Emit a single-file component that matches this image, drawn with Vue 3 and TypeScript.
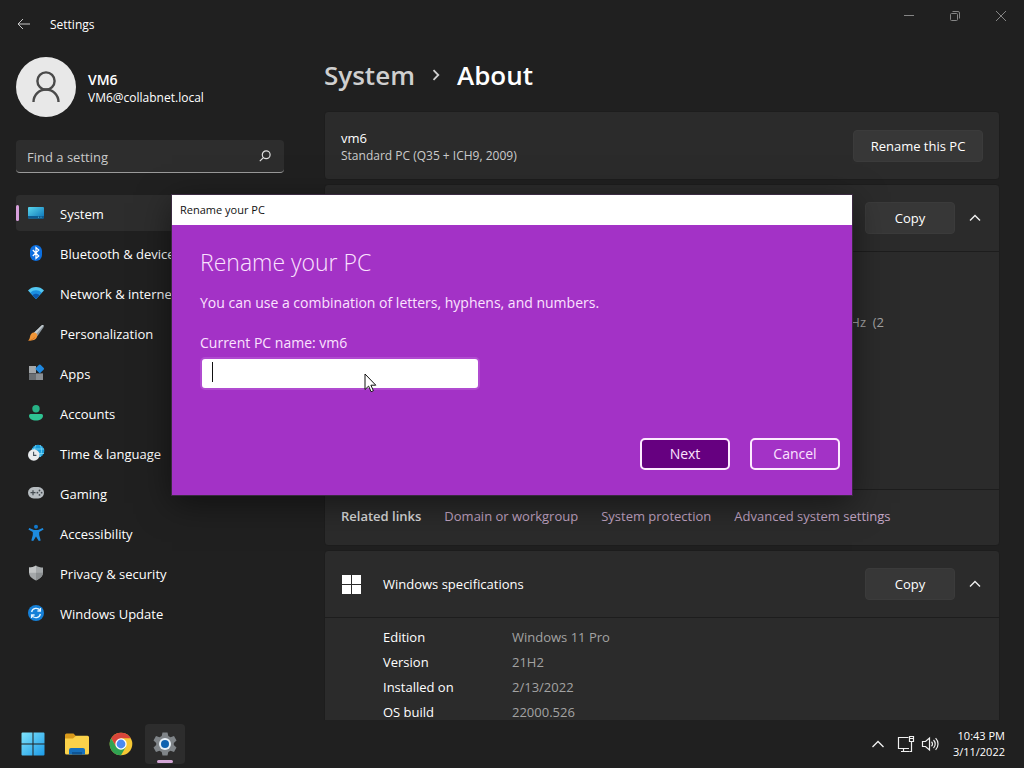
<script setup lang="ts">
import { ref } from 'vue'

interface NavItem {
  id: string
  label: string
}

interface SpecRow {
  name: string
  value: string
}

const navItems: NavItem[] = [
  { id: 'system', label: 'System' },
  { id: 'bluetooth', label: 'Bluetooth & devices' },
  { id: 'network', label: 'Network & internet' },
  { id: 'personalization', label: 'Personalization' },
  { id: 'apps', label: 'Apps' },
  { id: 'accounts', label: 'Accounts' },
  { id: 'time', label: 'Time & language' },
  { id: 'gaming', label: 'Gaming' },
  { id: 'accessibility', label: 'Accessibility' },
  { id: 'privacy', label: 'Privacy & security' },
  { id: 'update', label: 'Windows Update' },
]

const relatedLinks: string[] = ['Domain or workgroup', 'System protection', 'Advanced system settings']

const windowsSpecs: SpecRow[] = [
  { name: 'Edition', value: 'Windows 11 Pro' },
  { name: 'Version', value: '21H2' },
  { name: 'Installed on', value: '2/13/2022' },
  { name: 'OS build', value: '22000.526' },
]

const selected = ref('system')
const search = ref('')
const pcName = ref('')
</script>

<template>
  <div class="desktop">
    <div class="window">
      <header class="titlebar">
        <button class="back" type="button" aria-label="Back">
          <svg width="14" height="12" viewBox="0 0 14 12" fill="none" stroke="#c8c8c8">
            <path d="M13 6H1M6 1L1 6l5 5" />
          </svg>
        </button>
        <span class="app-title">Settings</span>
        <div class="window-controls">
          <button type="button" aria-label="Minimize">
            <svg width="12" height="12" viewBox="0 0 12 12" fill="none" stroke="#858585"><path d="M1 5.500h10" /></svg>
          </button>
          <button type="button" aria-label="Restore">
            <svg width="12" height="12" viewBox="0 0 12 12" fill="none" stroke="#858585">
              <rect x="1.500" y="3.500" width="7" height="7" rx="1" />
              <path d="M3.500 1.500H9a1.500 1.500 0 0 1 1.500 1.500v5.500" />
            </svg>
          </button>
          <button type="button" aria-label="Close">
            <svg width="12" height="12" viewBox="0 0 12 12" fill="none" stroke="#858585"><path d="M1 1l10 10M11 1L1 11" /></svg>
          </button>
        </div>
      </header>

      <div class="body">
        <aside class="sidebar">
          <div class="profile">
            <svg class="avatar" width="60" height="60" viewBox="0 0 60 60">
              <circle cx="30" cy="30" r="30" fill="#e8e8e8" />
              <g fill="none" stroke="#4a4a4a" stroke-width="2.400">
                <circle cx="30" cy="24" r="8.600" />
                <path d="M17.500 45a12.500 12.500 0 0 1 25 0" />
              </g>
            </svg>
            <div class="user">
              <div class="user-name">VM6</div>
              <div class="user-mail">VM6@collabnet.local</div>
            </div>
          </div>

          <div class="search">
            <input v-model="search" type="text" placeholder="Find a setting" aria-label="Find a setting" />
            <svg width="12" height="12" viewBox="0 0 12 12" fill="none" stroke="#e0e0e0" stroke-width="1.200">
              <circle cx="7.200" cy="4.800" r="3.900" />
              <path d="M4.400 7.600L.8 11.200" />
            </svg>
          </div>

          <nav class="nav">
            <button
              v-for="item in navItems"
              :key="item.id"
              type="button"
              :class="{ active: item.id === selected }"
              @click="selected = item.id"
            >
              <svg class="nav-icon" width="18" height="18" viewBox="0 0 18 18">
                <template v-if="item.id === 'system'">
                  <defs>
                    <linearGradient id="screen" x1="0" y1="0" x2="1" y2="1">
                      <stop offset="0" stop-color="#5ad6ec" />
                      <stop offset="1" stop-color="#0a72b8" />
                    </linearGradient>
                  </defs>
                  <rect x="1" y="3" width="16" height="11.500" rx="1" fill="url(#screen)" />
                  <path d="M1 12h16v1.500a1 1 0 0 1-1 1H2a1 1 0 0 1-1-1z" fill="#0e5c93" />
                  <path d="M11 13.200h1M13.500 13.200h1" stroke="#5ad6ec" stroke-width=".8" />
                </template>
                <template v-else-if="item.id === 'bluetooth'">
                  <rect x="3" y="1" width="12" height="16" rx="6" fill="#0c6fe0" />
                  <path d="M5.800 6l6 6L9 14.500v-11L11.800 6l-6 6" fill="none" stroke="#fff" stroke-width="1.200" />
                </template>
                <template v-else-if="item.id === 'network'">
                  <path d="M1 6.500c4.300-4.600 11.700-4.600 16 0L9 15z" fill="#53c7f2" />
                  <path d="M3.300 8.800c3-3.300 8.400-3.300 11.400 0L9 15z" fill="#1b8fe0" />
                  <path d="M5.500 11.200c1.900-2 5.100-2 7 0L9 15z" fill="#0b58ae" />
                </template>
                <template v-else-if="item.id === 'personalization'">
                  <path d="M14.800 1.300c1.400-.8 2.500.1 1.900 1.600l-6.200 9.200-3.800-3.200z" fill="#8d989f" />
                  <path d="M14.800 1.300c.8-.4 1.400-.4 1.700.1L8.700 10.400l-2-1.500z" fill="#c4ccd0" />
                  <path d="M6.900 8.500c2.200.2 3.400 1.500 3.500 3.300-.6 3.700-4.400 5.500-9.700 4.800 1.700-.8 1.900-2 2.300-3.900.4-2.400 1.900-4.200 3.900-4.200z" fill="#ef9537" />
                  <path d="M8.300 12.500c-.9 2.600-3.400 4-7.600 4.100 3.600-.5 5.800-1.900 7.600-4.100z" fill="#c4641c" />
                </template>
                <template v-else-if="item.id === 'apps'">
                  <rect x="2" y="2" width="7" height="7" fill="#a3a7aa" />
                  <rect x="2" y="9" width="7" height="7" fill="#6b6f73" />
                  <rect x="9" y="9" width="7" height="7" fill="#8a8e92" />
                  <rect x="2" y="9" width="14" height=".6" fill="#46494c" />
                  <rect x="9.500" y="1.500" width="6.600" height="6.600" rx="1" transform="rotate(45 12.800 4.800)" fill="#1e88e0" />
                </template>
                <template v-else-if="item.id === 'accounts'">
                  <circle cx="9" cy="4.700" r="3.700" fill="#27b286" />
                  <path d="M3.500 10h11A1.500 1.500 0 0 1 16 11.500c0 3.200-3 5-7 5s-7-1.800-7-5A1.500 1.500 0 0 1 3.500 10z" fill="#2fc393" />
                </template>
                <template v-else-if="item.id === 'time'">
                  <circle cx="11" cy="7" r="6.300" fill="#1b9ddb" />
                  <path d="M9 1c-2 3-2 8 0 12M13 1c2 3 2 8 0 12M5 5h12M5 9.500h12" fill="none" stroke="#7fdcf7" stroke-width=".8" />
                  <circle cx="6.800" cy="11" r="5.800" fill="#e8ebee" />
                  <path d="M6.600 7.800v3.600h2.800" fill="none" stroke="#45515c" stroke-width="1.100" />
                </template>
                <template v-else-if="item.id === 'gaming'">
                  <rect x="1" y="3" width="16" height="11.500" rx="5.700" fill="#b6bcc0" />
                  <path d="M6 6.200v5M3.500 8.700h5" stroke="#444b50" stroke-width="1.200" />
                  <g fill="#444b50">
                    <circle cx="12.500" cy="6.500" r=".9" /><circle cx="12.500" cy="10.900" r=".9" />
                    <circle cx="10.400" cy="8.700" r=".9" /><circle cx="14.600" cy="8.700" r=".9" />
                  </g>
                </template>
                <template v-else-if="item.id === 'accessibility'">
                  <circle cx="9" cy="2.800" r="2" fill="#1179cd" />
                  <path d="M2.300 3.900L7 6h4l4.700-2.100.9 1.700-4.400 2.300v3l1.500 5.600-1.900.6L9 12.400l-2.800 4.700-1.900-.6 1.500-5.600v-3L1.400 5.600z" fill="#1d8be0" />
                </template>
                <template v-else-if="item.id === 'privacy'">
                  <path d="M9 1.500c2 1.500 4.500 2 7 2v4.800c0 4-3 6.400-7 8.200-4-1.800-7-4.200-7-8.200V3.500c2.500 0 5-.5 7-2z" fill="#a4a8aa" />
                  <path d="M9 1.500v7.300H2V3.500c2.500 0 5-.5 7-2z" fill="#c2c5c6" />
                  <path d="M9 8.800h7c-.2 3.700-3.200 6-7 7.700z" fill="#8c9092" />
                </template>
                <template v-else>
                  <circle cx="9" cy="9" r="8" fill="#1580d8" />
                  <g fill="none" stroke="#e4f4ff" stroke-width="1.300">
                    <path d="M4.600 8A4.600 4.600 0 0 1 13 6.500M13.400 4v3h-3" />
                    <path d="M13.400 10A4.600 4.600 0 0 1 5 11.500M4.600 14v-3h3" />
                  </g>
                </template>
              </svg>
              <span>{{ item.label }}</span>
            </button>
          </nav>
        </aside>

        <main class="content">
          <h1 class="crumbs">
            <a href="#">System</a>
            <svg width="8" height="12" viewBox="0 0 8 12" fill="none" stroke="#d0d0d0" stroke-width="1.800"><path d="M1.500 1.200L6.300 6l-4.800 4.800" /></svg>
            <span>About</span>
          </h1>

          <section class="card pc">
            <div class="pc-text">
              <div class="pc-name">vm6</div>
              <div class="pc-model">Standard PC (Q35 + ICH9, 2009)</div>
            </div>
            <button class="btn rename" type="button">Rename this PC</button>
          </section>

          <section class="card">
            <div class="card-head">
              <button class="btn copy" type="button">Copy</button>
              <button class="expander" type="button" aria-label="Collapse device specifications">
                <svg width="12" height="8" viewBox="0 0 12 8" fill="none" stroke="#f0f0f0" stroke-width="1.400"><path d="M1 6.500l5-5 5 5" /></svg>
              </button>
            </div>
            <div class="device-body">
              <p class="processor">GHz&nbsp; (2</p>
            </div>
            <div class="related">
              <strong>Related links</strong>
              <a v-for="link in relatedLinks" :key="link" href="#">{{ link }}</a>
            </div>
          </section>

          <section class="card">
            <div class="card-head">
              <svg class="logo" width="19" height="19" viewBox="0 0 19 19" fill="#fff">
                <path d="M0 0h9v9H0zM10 0h9v9h-9zM0 10h9v9H0zM10 10h9v9h-9z" />
              </svg>
              <h2>Windows specifications</h2>
              <button class="btn copy" type="button">Copy</button>
              <button class="expander" type="button" aria-label="Collapse Windows specifications">
                <svg width="12" height="8" viewBox="0 0 12 8" fill="none" stroke="#f0f0f0" stroke-width="1.400"><path d="M1 6.500l5-5 5 5" /></svg>
              </button>
            </div>
            <dl class="specs">
              <template v-for="row in windowsSpecs" :key="row.name">
                <dt>{{ row.name }}</dt>
                <dd>{{ row.value }}</dd>
              </template>
            </dl>
          </section>
        </main>
      </div>
    </div>

    <footer class="taskbar">
      <div class="task-icons">
        <button type="button" aria-label="Start">
          <svg width="24" height="24" viewBox="0 0 24 24">
            <defs>
              <linearGradient id="start" x1="0" y1="0" x2="1" y2="1">
                <stop offset="0" stop-color="#7fe3fb" />
                <stop offset="1" stop-color="#1c9be8" />
              </linearGradient>
            </defs>
            <path d="M1.500.5h10v11H.5v-10a1 1 0 0 1 1-1zM12.500.5h10a1 1 0 0 1 1 1v10h-11zM.5 12.500h11v11h-10a1 1 0 0 1-1-1zM12.500 12.500h11v10a1 1 0 0 1-1 1h-10z" fill="url(#start)" />
          </svg>
        </button>
        <button type="button" aria-label="File Explorer">
          <svg width="26" height="24" viewBox="0 0 26 24">
            <path d="M1 3a1.500 1.500 0 0 1 1.500-1.500h7L12 4v6H1z" fill="#d99a1b" />
            <path d="M1 6.500h8L12 3.800h11.500A1.500 1.500 0 0 1 25 5.300V21a1.500 1.500 0 0 1-1.500 1.500h-21A1.500 1.500 0 0 1 1 21z" fill="#fbd24a" />
            <path d="M5 22.500V18a2 2 0 0 1 2-2h12a2 2 0 0 1 2 2v4.500z" fill="#1670be" />
            <path d="M8 22.500V20h10v2.500z" fill="#0f5595" />
          </svg>
        </button>
        <button type="button" aria-label="Google Chrome">
          <svg width="24" height="24" viewBox="0 0 24 24">
            <circle cx="12" cy="12" r="11.300" fill="#f6c834" />
            <path d="M2.200 6.350A11.300 11.300 0 0 1 21.800 6.350H12L7.100 14.800z" fill="#d9453a" />
            <path d="M2.200 6.350A11.300 11.300 0 0 0 12 23.300l4.900-8.500H7.100z" fill="#30a352" />
            <circle cx="12" cy="12" r="5.700" fill="#fff" />
            <circle cx="12" cy="12" r="4.400" fill="#4a8af0" />
          </svg>
        </button>
        <button class="running" type="button" aria-label="Settings">
          <svg width="26" height="26" viewBox="0 0 26 26">
            <path d="M10.500 1.500h5l.8 3.500 2.200 1.200 3.500-1.100 2.500 4.300-2.700 2.500v2.200l2.700 2.500-2.500 4.300-3.500-1.100-2.200 1.200-.8 3.500h-5l-.8-3.500-2.200-1.200L4 20.900l-2.500-4.300 2.700-2.500v-2.200L1.500 9.400 4 5.100l3.500 1.100L9.700 5z" fill="#7f8488" />
            <circle cx="13" cy="13" r="6" fill="#e9f1f8" />
            <circle cx="13" cy="13" r="4" fill="#0f62b0" />
          </svg>
        </button>
      </div>
      <div class="tray">
        <button type="button" aria-label="Show hidden icons">
          <svg width="14" height="8" viewBox="0 0 14 8" fill="none" stroke="#f0f0f0" stroke-width="1.300"><path d="M1.500 7L7 1.500 12.500 7" /></svg>
        </button>
        <button type="button" aria-label="Network">
          <svg width="18" height="18" viewBox="0 0 18 18" fill="none" stroke="#f0f0f0" stroke-width="1.200">
            <path d="M11.500 2.500H1.500v11h10.500M4 16.500h8.500M6.500 13.500v3" />
            <path d="M12.500 1.500h4v5h-4zM12.500 3.500h4M14.500 6.500v10h-2" />
          </svg>
        </button>
        <button type="button" aria-label="Volume">
          <svg width="18" height="16" viewBox="0 0 18 16" fill="none" stroke="#f0f0f0" stroke-width="1.200">
            <path d="M1.500 5.500h3L8.500 2v12l-4-3.500h-3z" />
            <path d="M10.500 5.800a3 3 0 0 1 0 4.400M12.500 4a5.600 5.600 0 0 1 0 8M14.600 2.200a8.200 8.200 0 0 1 0 11.600" />
          </svg>
        </button>
        <time class="clock">10:43 PM<br />3/11/2022</time>
      </div>
    </footer>

    <div class="dialog" role="dialog" aria-labelledby="dialog-title">
      <div class="dialog-bar">Rename your PC</div>
      <form class="dialog-body" @submit.prevent>
        <h2 id="dialog-title">Rename your PC</h2>
        <p>You can use a combination of letters, hyphens, and numbers.</p>
        <label for="pc-name">Current PC name: vm6</label>
        <div class="field">
          <input id="pc-name" v-model="pcName" type="text" autocomplete="off" />
          <span class="caret"></span>
          <svg class="pointer" width="13" height="20" viewBox="0 0 13 20">
            <path d="M1 1v15.500l3.600-3.400 2.500 5.600 2.300-1-2.500-5.500h4.900z" fill="#fff" stroke="#111" />
          </svg>
        </div>
        <div class="actions">
          <button class="next" type="submit">Next</button>
          <button type="button">Cancel</button>
        </div>
      </form>
    </div>
  </div>
</template>

<style>
body {
  margin: 0;
  background: #202020;
}
</style>

<style scoped>
.desktop {
  position: relative;
  display: flex;
  flex-direction: column;
  height: 100vh;
  overflow: hidden;
  background: #202020;
  color: #fff;
  font: 13px/20px "Open Sans", "Noto Sans", sans-serif;
}

.desktop * {
  box-sizing: border-box;
}

button,
input {
  margin: 0;
  padding: 0;
  border: 0;
  background: none;
  color: inherit;
  font: inherit;
}

h1,
h2,
p,
dl,
dd {
  margin: 0;
  font-weight: 400;
}

a {
  color: inherit;
  text-decoration: none;
}

svg {
  display: block;
  flex: none;
}

.window {
  flex: 1;
  min-height: 0;
  display: flex;
  flex-direction: column;
  overflow: hidden;
}

.titlebar {
  flex: none;
  display: flex;
  align-items: center;
  height: 48px;
  padding-left: 17px;
}

.back {
  margin-right: 19px;
}

.app-title {
  padding-top: 2px;
  font-size: 12px;
}

.window-controls {
  display: flex;
  align-self: flex-start;
  margin-left: auto;
}

.window-controls button {
  display: grid;
  place-items: center;
  width: 46px;
  height: 32px;
}

.body {
  flex: 1;
  min-height: 0;
  display: flex;
}

.sidebar {
  flex: none;
  width: 300px;
  padding: 9px 16px 0;
}

.profile {
  display: flex;
  align-items: center;
  gap: 12px;
}

.user {
  padding-top: 4px;
}

.user-name {
  font-size: 14px;
  font-weight: 600;
  line-height: 18px;
}

.user-mail {
  font-size: 12px;
  line-height: 18px;
}

.search {
  display: flex;
  align-items: center;
  height: 33px;
  margin-top: 23px;
  padding: 0 13px 0 11px;
  border-bottom: 1px solid #9a9a9a;
  border-radius: 4px;
  background: #2d2d2d;
}

.search input {
  flex: 1;
  min-width: 0;
  padding-top: 2px;
  outline: none;
}

.search input::placeholder {
  color: #c9c9c9;
  opacity: 1;
}

.nav {
  display: flex;
  flex-direction: column;
  gap: 4px;
  margin-top: 22px;
}

.nav button {
  position: relative;
  display: flex;
  align-items: center;
  gap: 15px;
  height: 36px;
  padding-left: 11px;
  border-radius: 4px;
  text-align: left;
}

.nav span {
  padding-top: 2px;
}

.nav button.active {
  background: #2d2d2d;
}

.nav button.active::before {
  content: "";
  position: absolute;
  left: 0;
  top: 10px;
  width: 3px;
  height: 16px;
  border-radius: 2px;
  background: #d8a0dc;
}

.content {
  flex: 1;
  min-width: 0;
  padding: 7px 24px 0 24px;
}

.crumbs {
  display: flex;
  align-items: center;
  gap: 17px;
  height: 40px;
  margin-bottom: 16px;
  font-size: 26px;
  font-weight: 600;
}

.crumbs a {
  color: #cfcfcf;
}

.card {
  margin-bottom: 4px;
  border: 1px solid #1d1d1d;
  border-radius: 4px;
  background: #2b2b2b;
}

.pc {
  display: flex;
  align-items: center;
  justify-content: space-between;
  height: 69px;
  padding: 0 16px;
}

.pc-text {
  padding-top: 2px;
}

.pc-name {
  line-height: 18px;
}

.pc-model {
  font-size: 12px;
  line-height: 18px;
  color: #cbcbcb;
}

.btn {
  height: 32px;
  border: 1px solid #3b3b3b;
  border-radius: 4px;
  background: #373737;
}

.rename {
  width: 130px;
}

.copy {
  width: 90px;
  margin-left: auto;
}

.card-head {
  display: flex;
  align-items: center;
  height: 67px;
  padding: 0 8px 0 17px;
  border-bottom: 1px solid #1d1d1d;
}

.expander {
  display: grid;
  place-items: center;
  width: 32px;
  height: 32px;
  margin-left: 4px;
}

.logo {
  margin-right: 22px;
}

.card-head h2 {
  font-size: 13px;
}

.device-body {
  height: 237px;
  padding: 60px 115px 0 0;
}

.processor {
  color: #a3a3a3;
  text-align: right;
}

.related {
  display: flex;
  gap: 23px;
  padding: 16px 16px 19px;
  border-top: 1px solid #1d1d1d;
  color: #c3a6c5;
}

.related strong {
  color: #dcdcdc;
  font-weight: 600;
}

.specs {
  display: grid;
  grid-template-columns: 129px 1fr;
  row-gap: 9px;
  padding: 11px 16px 16px 58px;
  line-height: 16px;
}

.specs dd {
  color: #a3a3a3;
}

.taskbar {
  flex: none;
  display: flex;
  justify-content: space-between;
  height: 48px;
  padding: 0 19px 0 13px;
}

.task-icons {
  display: flex;
  align-items: center;
  gap: 4px;
}

.task-icons button {
  position: relative;
  display: grid;
  place-items: center;
  width: 40px;
  height: 40px;
  border-radius: 4px;
}

.task-icons .running {
  background: #2d2d2d;
}

.running::after {
  content: "";
  position: absolute;
  left: 12px;
  bottom: 1px;
  width: 16px;
  height: 3px;
  border-radius: 2px;
  background: #d3a6d6;
}

.tray {
  display: flex;
  align-items: center;
}

.tray button {
  margin-right: 6px;
}

.tray button:first-child {
  margin-right: 12px;
}

.clock {
  margin-left: 8px;
  font-size: 11px;
  line-height: 16px;
  text-align: right;
}

.dialog {
  position: absolute;
  top: 195px;
  left: calc(50% - 340px);
  width: 680px;
  box-shadow: 0 0 0 1px #3a2a40, 0 8px 32px rgba(0, 0, 0, 0.5);
  color: #fbe3ff;
  font-size: 14px;
}

.dialog-bar {
  height: 30px;
  padding: 0 8px;
  background: #fff;
  color: #111;
  font-size: 11px;
  line-height: 30px;
}

.dialog-body {
  display: flex;
  flex-direction: column;
  height: 270px;
  padding: 20px 12px 25px 28px;
  background: #a332c6;
}

.dialog-body h2 {
  font-size: 23px;
  font-weight: 300;
  line-height: 34px;
}

.dialog-body p {
  margin: 14px 0 20px;
}

.field {
  position: relative;
  width: 280px;
  margin-top: 4px;
}

.field input {
  width: 100%;
  height: 33px;
  padding: 0 10px;
  border: 2px solid #b04bd0;
  border-radius: 5px;
  outline: none;
  background: #fff;
  color: #111;
  caret-color: transparent;
}

.caret {
  position: absolute;
  top: 5px;
  left: 12px;
  width: 1px;
  height: 20px;
  background: #111;
}

.pointer {
  position: absolute;
  top: 16px;
  left: 164px;
}

.actions {
  display: flex;
  justify-content: flex-end;
  gap: 20px;
  margin-top: auto;
}

.actions button {
  width: 90px;
  height: 32px;
  border: 2px solid #fdeaff;
  border-radius: 5px;
}

.actions .next {
  background: #660080;
}
</style>
